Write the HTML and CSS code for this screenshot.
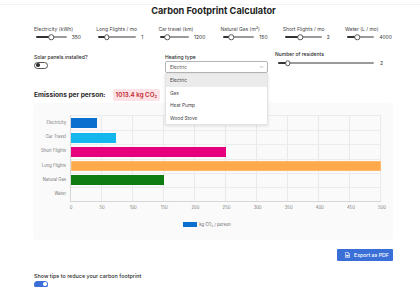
FILE: index.html
```html
<!DOCTYPE html>
<html lang="en">
<head>
<meta charset="utf-8">
<title>Carbon Footprint Calculator</title>
<link rel="stylesheet" href="styles.css">
</head>
<body>
<div class="app">
  <h1 class="title">Carbon Footprint Calculator</h1>

  <div class="sliders">
    <div class="field">
      <div class="label">Electricity (kWh)</div>
      <div class="slider-row"><div class="track" style="--p:50%"><span class="thumb"></span></div><span class="value">350</span></div>
    </div>
    <div class="field">
      <div class="label">Long Flights / mo</div>
      <div class="slider-row"><div class="track" style="--p:23%"><span class="thumb"></span></div><span class="value">1</span></div>
    </div>
    <div class="field">
      <div class="label">Car travel (km)</div>
      <div class="slider-row"><div class="track" style="--p:24%"><span class="thumb"></span></div><span class="value">1200</span></div>
    </div>
    <div class="field">
      <div class="label">Natural Gas (m³)</div>
      <div class="slider-row"><div class="track" style="--p:27%"><span class="thumb"></span></div><span class="value">150</span></div>
    </div>
    <div class="field">
      <div class="label">Short Flights / mo</div>
      <div class="slider-row"><div class="track" style="--p:42%"><span class="thumb"></span></div><span class="value">2</span></div>
    </div>
    <div class="field">
      <div class="label">Water (L / mo)</div>
      <div class="slider-row"><div class="track" style="--p:38%"><span class="thumb"></span></div><span class="value">4000</span></div>
    </div>
  </div>

  <div class="row2">
    <div class="solar">
      <div class="label strong">Solar panels installed?</div>
      <span class="toggle off"><span class="knob"></span></span>
    </div>
    <div class="heating">
      <div class="label strong">Heating type</div>
      <div class="select-wrap">
        <div class="select">
          <span>Electric</span>
          <svg class="chev" width="5" height="4" viewBox="0 0 5 4"><polyline points="0.8,1 2.5,2.8 4.2,1" fill="none" stroke="#999" stroke-width="0.6"/></svg>
        </div>
        <ul class="menu">
          <li class="active">Electric</li>
          <li>Gas</li>
          <li>Heat Pump</li>
          <li>Wood Stove</li>
        </ul>
      </div>
    </div>
    <div class="residents">
      <div class="label strong">Number of residents</div>
      <div class="slider-row wide"><div class="track" style="--p:10%"><span class="thumb"></span></div><span class="value">2</span></div>
    </div>
  </div>

  <div class="emissions">
    <span class="em-label">Emissions per person:</span>
    <span class="badge">1013.4 kg CO<sub>2</sub></span>
  </div>

  <div class="chart-card">
    <div class="chart">
      <div class="ylabels">
        <span>Electricity</span>
        <span>Car Travel</span>
        <span>Short Flights</span>
        <span>Long Flights</span>
        <span>Natural Gas</span>
        <span>Water</span>
      </div>
      <div class="plot">
        <div class="band"><span class="bar c-elec" style="width:26px"></span></div>
        <div class="band"><span class="bar c-car" style="width:45px"></span></div>
        <div class="band"><span class="bar c-short" style="width:155px"></span></div>
        <div class="band"><span class="bar c-long" style="width:310px"></span></div>
        <div class="band"><span class="bar c-gas" style="width:93px"></span></div>
        <div class="band"></div>
      </div>
    </div>
    <div class="xaxis">
      <span>0</span><span>50</span><span>100</span><span>150</span><span>200</span><span>250</span><span>300</span><span>350</span><span>400</span><span>450</span><span>500</span>
    </div>
    <div class="legend"><span class="swatch"></span><span>kg CO<sub>2</sub> / person</span></div>
  </div>

  <div class="actions">
    <button class="export" type="button">
      <svg width="5" height="6" viewBox="0 0 5 6"><path d="M0.5 0.4h2.6l1.4 1.4v3.8h-4z" fill="none" stroke="#fff" stroke-width="0.6"/><path d="M3.1 0.4v1.4h1.4" fill="none" stroke="#fff" stroke-width="0.5"/><rect x="1.2" y="2.9" width="2.6" height="1.6" fill="#fff"/></svg>
      <span>Export as PDF</span>
    </button>
  </div>

  <div class="tips">
    <div class="label strong tips-label">Show tips to reduce your carbon footprint</div>
    <span class="toggle on"><span class="knob"></span></span>
  </div>
</div>
</body>
</html>
```

FILE: styles.css
```css
* { box-sizing: border-box; }
html, body { margin: 0; padding: 0; background: #fff; }
body {
  font-family: Inter, "Liberation Sans", Arial, sans-serif;
  color: #222;
  width: 420px;
  height: 287px;
  overflow: hidden;
}
.app {
  margin-top: 4px;
  border-top: 1px solid #f2f2f2;
  padding: 0 27px 0 34px;
}
.title {
  margin: 0;
  padding-top: 0;
  font-size: 9.2px;
  line-height: 12px;
  font-weight: 700;
  text-align: center;
  color: #1e1e1e;
}
.label {
  font-size: 5px;
  line-height: 7px;
  color: #444;
  white-space: nowrap;
}
.label.strong { color: #2a2a2a; font-weight: 500; }

.sliders {
  margin-top: 9px;
  display: grid;
  grid-template-columns: repeat(6, 56px);
  column-gap: 6.2px;
}
.slider-row {
  display: flex;
  align-items: center;
  height: 8px;
  width: 47px;
  padding-left: 2px;
  gap: 5px;
}
.slider-row.wide { width: 108px; padding-left: 3px; gap: 6px; }
.track {
  position: relative;
  flex: 1;
  height: 1.2px;
  background: linear-gradient(to right, #333 0 var(--p), #9a9a9a var(--p) 100%);
  border-radius: 1px;
}
.thumb {
  position: absolute;
  left: var(--p);
  top: 50%;
  width: 5.5px;
  height: 5.5px;
  border-radius: 50%;
  background: #fff;
  border: 0.8px solid #555;
  transform: translate(-50%, -50%);
}
.value {
  font-size: 5px;
  line-height: 7px;
  color: #333;
}

.row2 {
  margin-top: 10px;
  display: flex;
  align-items: flex-start;
}
.solar { width: 131px; padding-top: 3px; }
.heating { width: 110px; padding-top: 3px; }
.residents { flex: 1; }
.residents .slider-row { margin-top: 1px; }

.toggle {
  display: flex;
  align-items: center;
  width: 14px;
  height: 6.5px;
  border-radius: 4px;
  margin-top: 1px;
  padding: 0 1.3px;
}
.toggle.off { border: 0.8px solid #555; background: #fff; }
.toggle.on { background: #3b6fd8; justify-content: flex-end; }
.toggle .knob {
  width: 3.6px;
  height: 3.6px;
  border-radius: 50%;
}
.toggle.off .knob { background: #333; }
.toggle.on .knob { background: #fff; }

.select-wrap {
  position: relative;
  width: 103px;
}
.select {
  display: flex;
  align-items: center;
  justify-content: space-between;
  height: 12px;
  padding: 0 3px 0 4px;
  border: 0.8px solid #b5b5b5;
  border-radius: 2px;
  background: #fff;
  font-size: 4.8px;
  color: #555;
}
.menu {
  position: absolute;
  left: 0;
  top: 100%;
  width: 103px;
  margin: 0;
  padding: 0;
  list-style: none;
  background: #fff;
  border: 0.6px solid #e4e4e4;
  box-shadow: 0 1px 3px rgba(0,0,0,0.12);
  z-index: 5;
}
.menu li {
  height: 12.5px;
  line-height: 12.5px;
  padding-left: 4px;
  font-size: 4.8px;
  color: #444;
}
.menu li.active { background: #ebebeb; }

.emissions {
  margin-top: 16px;
  display: flex;
  align-items: center;
  gap: 7px;
}
.em-label {
  font-size: 6.6px;
  font-weight: 700;
  color: #2a2a2a;
}
.badge {
  font-size: 6.2px;
  font-weight: 600;
  color: #c4262e;
  background: #fde3e6;
  border-radius: 2px;
  padding: 2px 3px;
  line-height: 8px;
}
sub { font-size: 0.65em; vertical-align: -0.25em; line-height: 0; }

.chart-card {
  margin-top: 2px;
  margin-left: -1px;
  width: 360px;
  height: 137px;
  background: #fafafa;
  border-radius: 4px;
  padding: 12px 12px 0 0;
}
.chart { display: flex; }
.ylabels {
  width: 38px;
  height: 86px;
  display: grid;
  grid-template-rows: repeat(6, 1fr);
  padding-right: 4px;
}
.ylabels span {
  display: flex;
  align-items: center;
  justify-content: flex-end;
  font-size: 4.2px;
  color: #777;
}
.plot {
  width: 311px;
  height: 87px;
  display: grid;
  grid-template-rows: repeat(6, 1fr);
  border-left: 1px solid #d6d6d6;
  border-bottom: 1px solid #d6d6d6;
  border-top: 1px solid #ececec;
  background: repeating-linear-gradient(to right, transparent 0 30px, #e9e9e9 30px 31px);
}
.band {
  display: flex;
  align-items: center;
  border-top: 1px solid #ececec;
}
.band:first-child { border-top: 0; }
.bar { display: block; height: 10px; }
.c-elec { background: #0b6fd0; }
.c-car { background: #14b6ee; }
.c-short { background: #e6007e; }
.c-long { background: #ffa94a; box-shadow: inset 0 0 0 0.6px #ffc98a; }
.c-gas { background: #0e7c12; }

.xaxis {
  margin-left: 28px;
  width: 331px;
  display: flex;
  justify-content: space-between;
  margin-top: 2px;
}
.xaxis span {
  width: 20px;
  text-align: center;
  font-size: 4.2px;
  line-height: 8px;
  color: #777;
}
.legend {
  margin-top: 10px;
  display: flex;
  align-items: center;
  justify-content: center;
  gap: 2px;
  font-size: 4.2px;
  color: #666;
}
.swatch {
  width: 14px;
  height: 4.5px;
  background: #0b6fd0;
}

.actions {
  display: flex;
  justify-content: flex-end;
  margin-top: 9px;
}
.export {
  display: flex;
  align-items: center;
  gap: 4px;
  height: 12px;
  width: 56px;
  padding: 0 0 0 8px;
  border: 0;
  border-radius: 1px;
  background: #3b6fd8;
  color: #fff;
  font-family: inherit;
  font-size: 5.2px;
  font-weight: 500;
}
.tips { margin-top: 12px; }
.tips-label { font-size: 5.4px; font-weight: 600; color: #222; }
.tips .toggle { margin-top: 1px; }
```
